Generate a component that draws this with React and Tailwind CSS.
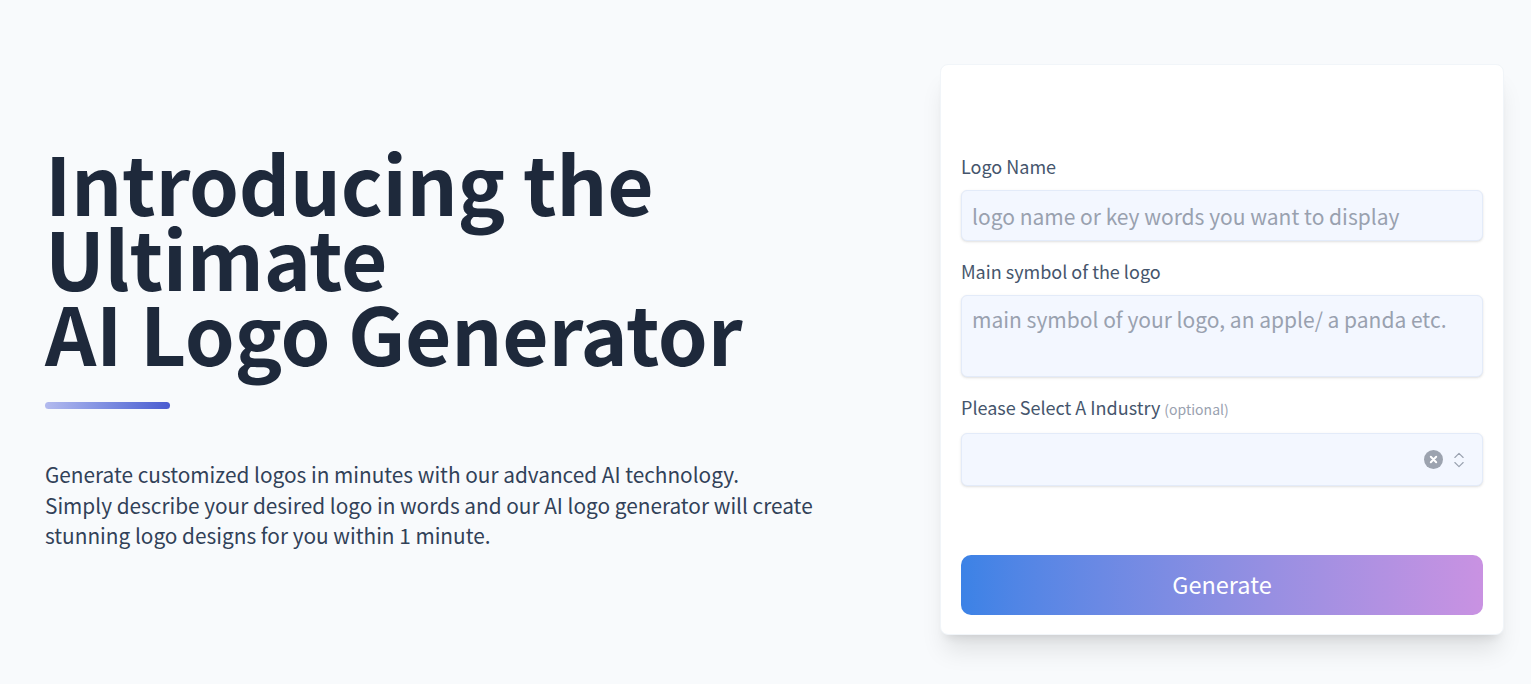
import { ChevronsUpDown } from "lucide-react";

const Field = ({ label, hint, children }) => {
    return (
        <div className="flex flex-col">
            <label className="text-[18px] leading-[26px] text-slate-600 mb-[11px]">
                {label}
                {hint && <span className="text-[14px] text-gray-400 ml-1">{hint}</span>}
            </label>
            {children}
        </div>
    );
};

const App = () => {
    return (
        <div
            className="min-h-[684px] bg-[#f8fafc] flex justify-between pl-[45px] pr-[27px]"
            style={{ fontFamily: '"Noto Sans CJK SC", "Noto Sans", sans-serif' }}
        >
            <div className="pt-[144px]">
                <h1 className="text-[80px] leading-[75px] font-bold text-[#1e293b] tracking-[-0.3px]">
                    Introducing the
                    <br />
                    Ultimate
                    <br />
                    AI Logo Generator
                </h1>
                <div className="mt-[33px] w-[125px] h-[7px] rounded-full bg-gradient-to-r from-[#b3baee] to-[#4a5bd0]" />
                <p className="mt-[50px] text-[20.8px] leading-[30.5px] text-slate-700">
                    Generate customized logos in minutes with our advanced AI technology.
                    <br />
                    Simply describe your desired logo in words and our AI logo generator will create
                    <br />
                    stunning logo designs for you within 1 minute.
                </p>
            </div>

            <div className="mt-[64px] w-[564px] h-[571px] bg-white rounded-lg border border-slate-100 shadow-xl px-[20px] pt-[88px] flex flex-col">
                <div className="flex flex-col gap-[17px]">
                    <Field label="Logo Name">
                        <input
                            className="h-[51px] rounded-md bg-[#f3f7ff] border border-[#e3ebf9] shadow-sm px-[10px] text-[21px] text-slate-700 placeholder:text-gray-400 outline-none"
                            placeholder="logo name or key words you want to display"
                        />
                    </Field>
                    <Field label="Main symbol of the logo">
                        <textarea
                            className="h-[82px] resize-none rounded-md bg-[#f3f7ff] border border-[#e3ebf9] shadow-sm px-[10px] py-[8px] text-[21px] leading-[30px] text-slate-700 placeholder:text-gray-400 outline-none"
                            placeholder="main symbol of your logo, an apple/ a panda etc."
                        />
                    </Field>
                    <Field label="Please Select A Industry" hint="(optional)">
                        <div className="h-[53px] rounded-md bg-[#f3f7ff] border border-[#e3ebf9] shadow-sm flex items-center justify-end pr-[13px] gap-[6px]">
                            <span className="w-[19px] h-[19px] rounded-full bg-[#9ca3af] flex items-center justify-center">
                                <svg width="9" height="9" viewBox="0 0 10 10" stroke="white" strokeWidth="2.2" strokeLinecap="round">
                                    <path d="M2 2 L8 8 M8 2 L2 8" />
                                </svg>
                            </span>
                            <ChevronsUpDown className="w-[20px] h-[24px] text-gray-400" strokeWidth={1.3} />
                        </div>
                    </Field>
                </div>
                <button className="mt-[69px] h-[60px] rounded-[10px] bg-gradient-to-r from-[#3b82e6] via-[#8b8ee2] to-[#c992e2] text-white text-[23.5px]">
                    Generate
                </button>
            </div>
        </div>
    );
};

export default App;
